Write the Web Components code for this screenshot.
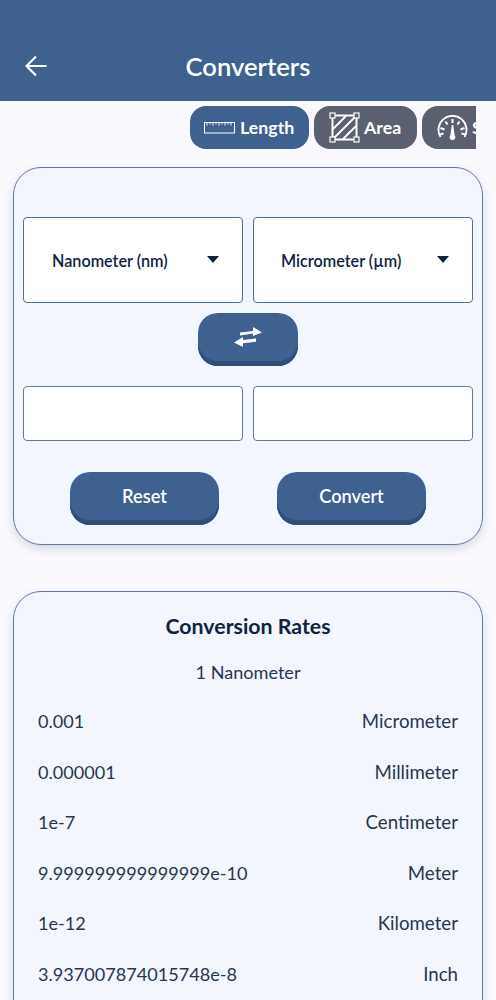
<!DOCTYPE html>
<html lang="en">
<head>
<meta charset="utf-8">
<title>Converters</title>
<style>
  html, body { margin: 0; height: 1000px; overflow: hidden; }
  body { background: #faf9fe; font-family: Lato, "Open Sans", sans-serif; color: #0f2340; }
  converter-page { display: block; }
</style>
</head>
<body>
<converter-page>
  <app-header title="Converters"></app-header>
  <tab-strip>
    <unit-tab active w="119" gap="5">
      <svg slot="icon" width="31" height="13" viewBox="0 0 31 13" fill="none" stroke="#fff" stroke-width="1"><rect x=".5" y="1.500" width="30" height="10.500"/><path d="M3 1.500v3M6 1.500v2M9 1.500v3M12 1.500v2M15 1.500v3M18 1.500v2M21 1.500v3M24 1.500v2M27 1.500v3" stroke-width="1"/></svg>
      Length
    </unit-tab>
    <unit-tab w="103" gap="4">
      <svg slot="icon" width="31" height="31" viewBox="0 0 31 31" fill="none" stroke="#fff" stroke-width="1.5"><rect x="3.5" y="3.5" width="24" height="24" stroke-width="2"/><path d="M4 17 17 4M4 27 27 4M14 27 27 14" stroke-width="1.800"/><g fill="#5a6070" stroke-width="1.200"><rect x="1" y="1" width="5" height="5"/><rect x="25" y="1" width="5" height="5"/><rect x="1" y="25" width="5" height="5"/><rect x="25" y="25" width="5" height="5"/></g></svg>
      Area
    </unit-tab>
    <unit-tab w="80" gap="4">
      <svg slot="icon" width="31" height="25" viewBox="0 0 31 25" fill="none" stroke="#fff" stroke-width="1.800"><path d="M3.500 22A14 14 0 1 1 27.500 22"/><path d="M15.500 4v4M8.500 6.500l2 3M22.500 6.500l-2 3M3.500 13l4 1.500M27.500 13l-4 1.500M3 19.500l3.500-1M28 19.500l-3.500-1" stroke-width="2"/><path d="M14.800 10h1.400l1.500 10.500a2.800 2.800 0 1 1-4.400 0z" fill="#fff" stroke="none"/></svg>
      Speed
    </unit-tab>
  </tab-strip>

  <panel-card class="converter">
    <form-row top="49">
      <unit-select>Nanometer (nm)</unit-select>
      <unit-select>Micrometer (µm)</unit-select>
    </form-row>
    <swap-row>
      <press-button w="100">
        <svg width="30" height="22" viewBox="0 0 30 22" fill="#fff"><path d="M7 6.400 20 5V1L29 6.500 20 10V7.500L7 9.400z"/><path d="M23 12.600 10 14V11L1 16.500 10 21V17.200L23 15.700z"/></svg>
      </press-button>
    </swap-row>
    <form-row top="20" h="55">
      <value-box></value-box>
      <value-box></value-box>
    </form-row>
    <action-row>
      <press-button w="149">Reset</press-button>
      <press-button w="149">Convert</press-button>
    </action-row>
  </panel-card>

  <panel-card class="rates">
    <rates-head>1 Nanometer</rates-head>
    <rate-row value="0.001" unit="Micrometer"></rate-row>
    <rate-row value="0.000001" unit="Millimeter"></rate-row>
    <rate-row value="1e-7" unit="Centimeter"></rate-row>
    <rate-row value="9.999999999999999e-10" unit="Meter"></rate-row>
    <rate-row value="1e-12" unit="Kilometer"></rate-row>
    <rate-row value="3.937007874015748e-8" unit="Inch"></rate-row>
  </panel-card>
</converter-page>

<script>
function shadow(el, html) {
  el.attachShadow({ mode: "open" }).innerHTML = html;
}

customElements.define("converter-page", class extends HTMLElement {
  constructor() {
    super();
    shadow(this, `
      <style>
        :host { display: block; height: 1000px; overflow: hidden; }
        ::slotted(panel-card.converter) { margin-top: 18px; height: 378px; }
        ::slotted(panel-card.rates) { margin-top: 46px; height: 500px; }
      </style>
      <slot></slot>`);
  }
});

customElements.define("app-header", class extends HTMLElement {
  constructor() {
    super();
    shadow(this, `
      <style>
        :host { display: block; background: #3e618f; color: #fff; height: 101px; box-sizing: border-box; padding-top: 50px; }
        .bar { display: grid; grid-template-columns: 1fr auto 1fr; align-items: center; height: 33px; padding: 0 25px; }
        h1 { margin: 0; font: 600 25.600px/33px Lato, sans-serif; }
        svg { display: block; margin-top: -1px; }
      </style>
      <div class="bar">
        <svg width="22" height="22" viewBox="0 0 22 22" fill="none" stroke="#fff" stroke-width="2.200"><path d="M21.500 11H2M11 1.500 1.500 11 11 20.500"/></svg>
        <h1>${this.getAttribute("title")}</h1>
        <span></span>
      </div>`);
  }
});

customElements.define("tab-strip", class extends HTMLElement {
  constructor() {
    super();
    shadow(this, `
      <style>
        :host { display: flex; gap: 5px; width: 476px; box-sizing: border-box; padding: 5px 0 0 190px; overflow: hidden; }
      </style>
      <slot></slot>`);
  }
});

customElements.define("unit-tab", class extends HTMLElement {
  constructor() {
    super();
    const w = this.getAttribute("w");
    const gap = this.getAttribute("gap");
    shadow(this, `
      <style>
        :host { flex: 0 0 ${w}px; height: 43px; box-sizing: border-box; display: flex; align-items: center; gap: ${gap}px; padding: 0 0 1px 15px; border-radius: 16px; background: #5a6070; color: #fff; font: 700 17.800px Lato, sans-serif; white-space: nowrap; overflow: hidden; }
        :host([active]) { background: #3e618f; padding-left: 14px; }
        ::slotted(svg) { flex: none; }
      </style>
      <slot name="icon"></slot><slot></slot>`);
  }
});

customElements.define("panel-card", class extends HTMLElement {
  constructor() {
    super();
    shadow(this, `
      <style>
        :host { display: block; box-sizing: border-box; margin: 0 13px; width: 470px; padding: 0 9px; background: #f4f6fe; border: 1.300px solid #5f7a9f; border-radius: 28px; box-shadow: 0 4px 10px rgba(40,50,80,.16); }
      </style>
      <slot></slot>`);
  }
});

customElements.define("form-row", class extends HTMLElement {
  constructor() {
    super();
    const top = this.getAttribute("top");
    const h = this.getAttribute("h") || 86;
    shadow(this, `
      <style>
        :host { display: grid; grid-template-columns: 220px 220px; gap: 10px; height: ${h}px; margin-top: ${top}px; }
      </style>
      <slot></slot>`);
  }
});

customElements.define("unit-select", class extends HTMLElement {
  constructor() {
    super();
    shadow(this, `
      <style>
        :host { display: flex; align-items: center; justify-content: space-between; box-sizing: border-box; height: 86px; padding: 0 23px 0 28px; background: #fff; border: 1.300px solid #4f6d96; border-radius: 4px; color: #0f2340; font: 600 16.200px Lato, sans-serif; white-space: nowrap; }
        :host(:last-child) { padding-left: 27px; }
        i { width: 0; height: 0; border-left: 6.500px solid transparent; border-right: 6.500px solid transparent; border-top: 7px solid #0f2340; margin-bottom: 2px; }
      </style>
      <span><slot></slot></span><i></i>`);
  }
});

customElements.define("value-box", class extends HTMLElement {
  constructor() {
    super();
    shadow(this, `
      <style>
        :host { display: block; box-sizing: border-box; height: 55px; background: #fff; border: 1.300px solid #5f7a9f; border-radius: 4px; }
      </style>`);
  }
});

customElements.define("swap-row", class extends HTMLElement {
  constructor() {
    super();
    shadow(this, `
      <style>
        :host { display: flex; justify-content: center; margin-top: 10px; }
      </style>
      <slot></slot>`);
  }
});

customElements.define("action-row", class extends HTMLElement {
  constructor() {
    super();
    shadow(this, `
      <style>
        :host { display: flex; justify-content: center; gap: 58px; margin-top: 31px; }
      </style>
      <slot></slot>`);
  }
});

customElements.define("press-button", class extends HTMLElement {
  constructor() {
    super();
    const w = this.getAttribute("w");
    shadow(this, `
      <style>
        :host { display: flex; align-items: center; justify-content: center; box-sizing: border-box; width: ${w}px; height: 53px; padding-bottom: 6px; background: #3e618f; border-radius: 20px; box-shadow: inset 0 -5px 0 #2f4d78; color: #fff; font: 600 18.200px Lato, sans-serif; }
        ::slotted(svg) { display: block; }
      </style>
      <slot></slot>`);
  }
});

customElements.define("rates-head", class extends HTMLElement {
  constructor() {
    super();
    shadow(this, `
      <style>
        :host { display: block; text-align: center; padding-top: 19px; margin-bottom: 12px; }
        h2 { margin: 0 0 19px; font: 700 21.300px/30px Lato, sans-serif; color: #0f2340; }
        p { margin: 0; font: 400 18.100px/24px Lato, sans-serif; color: #26364f; }
      </style>
      <h2>Conversion Rates</h2>
      <p><slot></slot></p>`);
  }
});

customElements.define("rate-row", class extends HTMLElement {
  constructor() {
    super();
    shadow(this, `
      <style>
        :host { display: flex; justify-content: space-between; align-items: center; height: 50.500px; padding: 0 15px; font: 400 18.100px Lato, sans-serif; color: #26364f; }
        .unit { font-size: 18.700px; }
      </style>
      <span>${this.getAttribute("value")}</span><span class="unit">${this.getAttribute("unit")}</span>`);
  }
});
</script>
</body>
</html>
